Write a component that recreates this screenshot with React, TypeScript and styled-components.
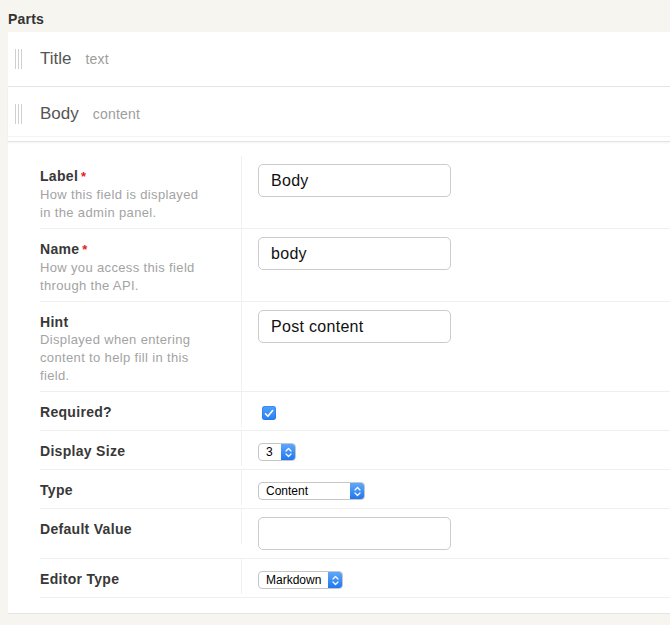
import React from "react";
import styled, { createGlobalStyle } from "styled-components";

const GlobalStyle = createGlobalStyle`
  html, body {
    margin: 0;
    padding: 0;
    background: #f6f5f0;
  }
  body {
    font-family: "Liberation Sans", Arial, Helvetica, sans-serif;
    color: #333;
  }
  * { box-sizing: border-box; }
`;

const Page = styled.div`
  min-height: 625px;
  padding: 10px 0 0 8px;
`;

const Heading = styled.h2`
  margin: 0 0 4px;
  font-size: 14px;
  line-height: 18px;
  font-weight: 700;
  color: #333;
  letter-spacing: 0.2px;
`;

const PartList = styled.div`
  background: #fff;
`;

const PartHeader = styled.div<{ $open?: boolean }>`
  position: relative;
  z-index: 1;
  display: flex;
  align-items: center;
  height: ${(p) => (p.$open ? "55px" : "55px")};
  padding-left: 7px;
  background: #fff;
  border-bottom: 1px solid ${(p) => (p.$open ? "#e2e2e2" : "#dfe5ea")};
  box-shadow: ${(p) =>
    p.$open
      ? "inset 0 -4px 0 #fff, inset 0 -5px 0 #f3f3f3, 0 1px 2px rgba(0,0,0,0.05)"
      : "none"};
`;

const Handle = styled.svg`
  flex: none;
  display: block;
`;

const PartName = styled.span`
  margin-left: 18px;
  font-size: 17px;
  line-height: 20px;
  color: #555;
`;

const PartType = styled.span`
  margin-left: 14px;
  font-size: 14px;
  line-height: 20px;
  color: #9d9d9d;
  letter-spacing: 0.2px;
`;

const FormPanel = styled.div`
  background: #fff;
  padding: 14px 0 15px 32px;
  border-bottom: 1px solid #e4e4e4;
`;

const Row = styled.div`
  display: flex;
  align-items: flex-start;
  border-bottom: 1px solid #efefef;
`;

const LabelCell = styled.div`
  flex: none;
  width: 202px;
  padding: 11px 0 6px;
  border-right: 1px solid #f1f1f1;
`;

const FieldCell = styled.div`
  padding: 8px 16px;
`;

const FieldTitle = styled.div`
  font-size: 14px;
  line-height: 18px;
  font-weight: 700;
  color: #383838;
  letter-spacing: 0.3px;
`;

const Required = styled.span`
  margin-left: 3px;
  color: #e2231a;
  font-size: 13px;
`;

const Description = styled.div`
  max-width: 165px;
  font-size: 13px;
  line-height: 18px;
  color: #a3a3a3;
  letter-spacing: 0.35px;
`;

const TextInput = styled.input`
  display: block;
  width: 193px;
  height: 33px;
  margin: 0;
  padding: 0 12px;
  border: 1px solid #cbcbcb;
  border-radius: 5px;
  background: #fff;
  font-family: "Liberation Sans", Arial, sans-serif;
  font-size: 16px;
  letter-spacing: 0.3px;
  color: #111;
  outline: none;
`;

const CheckBox = styled.span`
  display: flex;
  align-items: center;
  justify-content: center;
  width: 14px;
  height: 14px;
  margin: 6px 0 2px 4px;
  border-radius: 3px;
  background: linear-gradient(#4fa2fa, #2b80f2);
  box-shadow: inset 0 0 0 1px rgba(20, 100, 220, 0.35);
`;

const SelectBox = styled.div<{ $width: number }>`
  display: flex;
  width: ${(p) => p.$width}px;
  height: 18px;
  margin-top: 4px;
  border: 1px solid #c6c6c6;
  border-radius: 4px;
  background: #fff;
  overflow: hidden;
`;

const NativeSelect = styled.select`
  flex: 1;
  min-width: 0;
  height: 100%;
  margin: 0;
  padding: 0 0 0 7px;
  border: none;
  background: transparent;
  appearance: none;
  -webkit-appearance: none;
  font-family: "Liberation Sans", Arial, sans-serif;
  font-size: 12px;
  line-height: 16px;
  color: #000;
  outline: none;
`;

const Stepper = styled.span`
  flex: none;
  width: 15px;
  display: flex;
  align-items: center;
  justify-content: center;
  margin: -1px -1px -1px 0;
  background: linear-gradient(#62abfb, #1e74ee);
  border-radius: 0 4px 4px 0;
`;

const DragHandle = () => (
  <Handle width="7" height="20" viewBox="0 0 7 20" aria-hidden="true">
    <line x1="0.5" y1="0" x2="0.5" y2="20" stroke="#cfcfcf" strokeWidth="1" />
    <line x1="3.5" y1="0" x2="3.5" y2="20" stroke="#cfcfcf" strokeWidth="1" />
    <line x1="6.5" y1="0" x2="6.5" y2="20" stroke="#cfcfcf" strokeWidth="1" />
  </Handle>
);

const Select = ({ value, width }: { value: string; width: number }) => (
  <SelectBox $width={width}>
    <NativeSelect defaultValue={value}>
      <option value={value}>{value}</option>
    </NativeSelect>
    <Stepper>
      <svg width="7" height="11" viewBox="0 0 7 11" aria-hidden="true">
        <path d="M1 4 L3.5 1.5 L6 4" fill="none" stroke="#fff" strokeWidth="1.2" strokeLinecap="round" strokeLinejoin="round" />
        <path d="M1 7 L3.5 9.5 L6 7" fill="none" stroke="#fff" strokeWidth="1.2" strokeLinecap="round" strokeLinejoin="round" />
      </svg>
    </Stepper>
  </SelectBox>
);

type Field = {
  title: string;
  required?: boolean;
  desc?: string;
  control: React.ReactNode;
};

const fields: Field[] = [
  {
    title: "Label",
    required: true,
    desc: "How this field is displayed in the admin panel.",
    control: <TextInput defaultValue="Body" />,
  },
  {
    title: "Name",
    required: true,
    desc: "How you access this field through the API.",
    control: <TextInput defaultValue="body" />,
  },
  {
    title: "Hint",
    desc: "Displayed when entering content to help fill in this field.",
    control: <TextInput defaultValue="Post content" />,
  },
  {
    title: "Required?",
    control: (
      <CheckBox role="checkbox" aria-checked="true">
        <svg width="10" height="9" viewBox="0 0 10 9" aria-hidden="true">
          <path d="M1.5 4.8 L3.9 7.2 L8.6 1.6" fill="none" stroke="#fff" strokeWidth="1.6" strokeLinecap="round" strokeLinejoin="round" />
        </svg>
      </CheckBox>
    ),
  },
  { title: "Display Size", control: <Select value="3" width={38} /> },
  { title: "Type", control: <Select value="Content" width={107} /> },
  { title: "Default Value", control: <TextInput defaultValue="" /> },
  { title: "Editor Type", control: <Select value="Markdown" width={85} /> },
];

export default function App() {
  return (
    <Page>
      <GlobalStyle />
      <Heading>Parts</Heading>
      <PartList>
        <PartHeader>
          <DragHandle />
          <PartName>Title</PartName>
          <PartType>text</PartType>
        </PartHeader>
        <PartHeader $open>
          <DragHandle />
          <PartName>Body</PartName>
          <PartType>content</PartType>
        </PartHeader>
        <FormPanel>
          {fields.map((f) => (
            <Row key={f.title}>
              <LabelCell>
                <FieldTitle>
                  {f.title}
                  {f.required && <Required>*</Required>}
                </FieldTitle>
                {f.desc && <Description>{f.desc}</Description>}
              </LabelCell>
              <FieldCell>{f.control}</FieldCell>
            </Row>
          ))}
        </FormPanel>
      </PartList>
    </Page>
  );
}
